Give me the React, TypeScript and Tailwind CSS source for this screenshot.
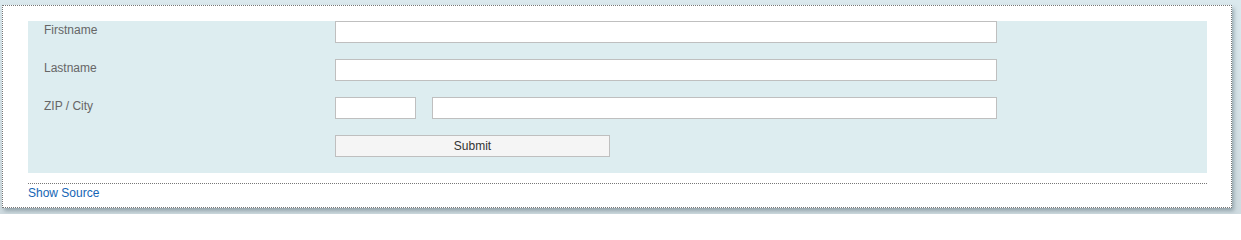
export default function App() {
  const font = { fontFamily: '"Liberation Sans", Arial, sans-serif' };
  return (
    <div
      className="w-[1241px] h-[214px] overflow-hidden bg-gradient-to-b from-[#dbe9ee] to-[#cfdbe0] pt-[5px] pl-[2px] pr-[9px] pb-[6px]"
      style={font}
    >
      <div className="h-[203px] border border-dotted border-[#777] bg-white pt-[15px] pl-[25px] pr-[24px] shadow-[2px_3px_4px_rgba(90,110,120,0.5)]">
        <div className="bg-[#ddedf0] h-[152px] flex flex-col gap-4 text-[12px]">
          <div className="flex h-[22px]">
            <label className="w-[307px] pl-4 pt-[1px] leading-4 text-[#666]">Firstname</label>
            <input className="w-[662px] h-[22px] border border-[#bfbfbf] bg-white" />
          </div>
          <div className="flex h-[22px]">
            <label className="w-[307px] pl-4 pt-[1px] leading-4 text-[#666]">Lastname</label>
            <input className="w-[662px] h-[22px] border border-[#bfbfbf] bg-white" />
          </div>
          <div className="flex h-[22px]">
            <label className="w-[307px] pl-4 pt-[1px] leading-4 text-[#666]">ZIP / City</label>
            <input className="w-[81px] h-[22px] border border-[#bfbfbf] bg-white" />
            <input className="ml-4 w-[565px] h-[22px] border border-[#bfbfbf] bg-white" />
          </div>
          <div className="flex h-[22px]">
            <div className="w-[307px]" />
            <button className="w-[275px] h-[22px] border border-[#bfbfbf] bg-[#f5f5f5] text-[#333] text-[12px]">
              Submit
            </button>
          </div>
        </div>
        <div className="mt-[10px] border-t border-dotted border-[#777]" />
        <a href="#" className="block pt-[1px] text-[12px] leading-4 text-[#1565b5]">
          Show Source
        </a>
      </div>
    </div>
  );
}
